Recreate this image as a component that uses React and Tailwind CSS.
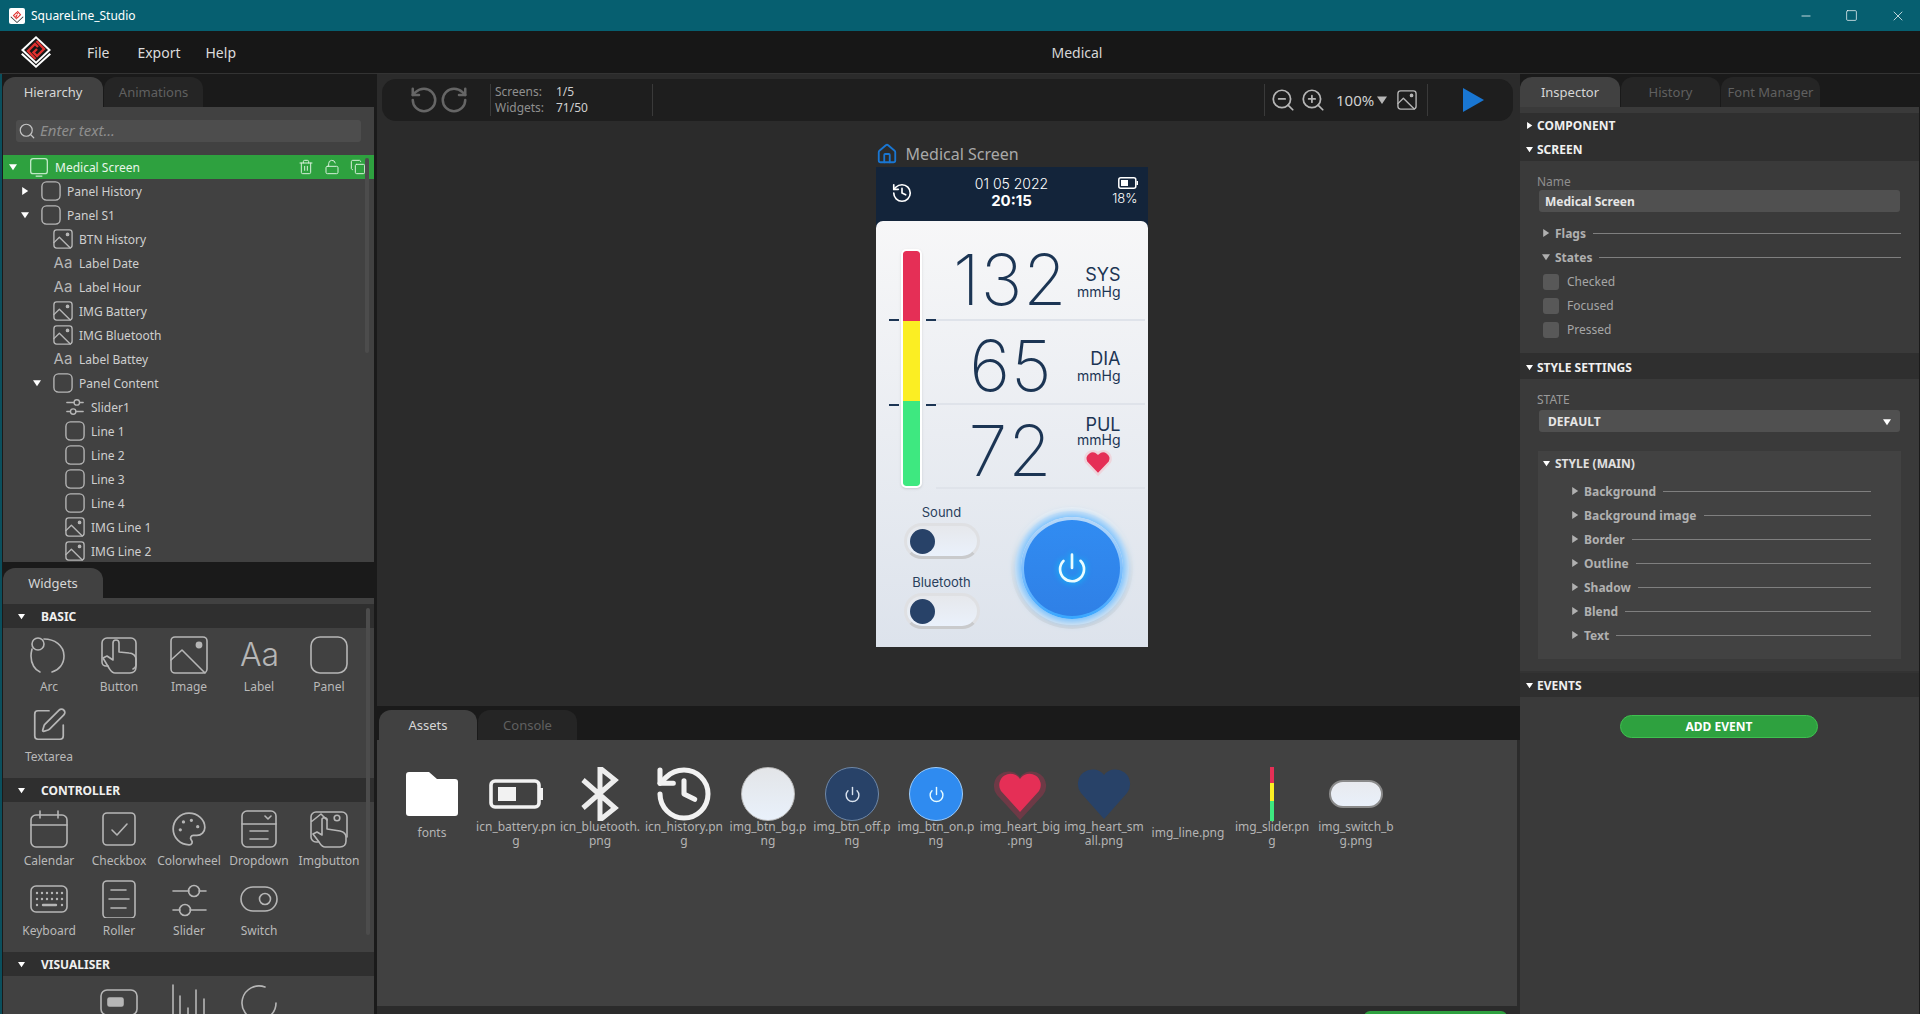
import React from 'react';
import { Search, Trash2, LockOpen, Copy, RotateCcw, RotateCw, ZoomIn, ZoomOut, House, History, Palette, SquarePen, Minus, Square, X, Power } from 'lucide-react';

const Tri = ({ dir = 'down', c = 'fill-white', s = 'w-[8px] h-[8px]' }) => (
  <svg viewBox="0 0 10 10" className={s + ' shrink-0 ' + c}>
    {dir === 'down' ? <polygon points="0,1.5 10,1.5 5,9" /> : <polygon points="1.5,0 9,5 1.5,10" />}
  </svg>
);

const I = ({ children, s = 'w-[20px] h-[20px]' }) => (
  <svg viewBox="1 1 22 22" fill="none" stroke="#b6b6b6" strokeWidth="1.5" strokeLinecap="round" strokeLinejoin="round" className={s + ' shrink-0'}>{children}</svg>
);

const PanelI = ({ s }) => <I s={s}><rect x="2" y="2" width="20" height="20" rx="5" /></I>;
const ImgI = ({ s }) => <I s={s}><rect x="2" y="2" width="20" height="20" rx="3" /><path d="M2 16l6-6 12 12" /><circle cx="17" cy="7" r="1.3" fill="#b6b6b6" /></I>;
const AaI = ({ big }) => <span className={big ? "w-[38px] text-center text-[32px] leading-[38px] font-light text-[#b6b6b6] font-['Inter',sans-serif]" : "w-[20px] text-center text-[15px] leading-[20px] font-normal text-[#b6b6b6] font-['Inter',sans-serif]"}>Aa</span>;
const SliderI = ({ s }) => <I s={s}><path d="M3 7h8M17 7h4M3 17h4M13 17h8" /><circle cx="14" cy="7" r="3" /><circle cx="10" cy="17" r="3" /></I>;
const ScreenI = () => <svg viewBox="0 0 24 24" fill="none" stroke="#bfe8c6" strokeWidth="1.6" className="w-[20px] h-[20px] shrink-0"><rect x="2" y="2" width="20" height="18" rx="3" /><path d="M8 23h8" /></svg>;

const tree = [
  { n: 'Panel History', d: 1, a: 'right', i: PanelI },
  { n: 'Panel S1', d: 1, a: 'down', i: PanelI },
  { n: 'BTN History', d: 2, i: ImgI },
  { n: 'Label Date', d: 2, i: AaI },
  { n: 'Label Hour', d: 2, i: AaI },
  { n: 'IMG Battery', d: 2, i: ImgI },
  { n: 'IMG Bluetooth', d: 2, i: ImgI },
  { n: 'Label Battey', d: 2, i: AaI },
  { n: 'Panel Content', d: 2, a: 'down', i: PanelI },
  { n: 'Slider1', d: 3, i: SliderI },
  { n: 'Line 1', d: 3, i: PanelI },
  { n: 'Line 2', d: 3, i: PanelI },
  { n: 'Line 3', d: 3, i: PanelI },
  { n: 'Line 4', d: 3, i: PanelI },
  { n: 'IMG Line 1', d: 3, i: ImgI },
  { n: 'IMG Line 2', d: 3, i: ImgI },
];
const indent = ['w-0', 'w-[12px]', 'w-[24px]', 'w-[36px]'];

const Logo = ({ s, bg = '#171717', under = '#fff' }) => (
  <svg viewBox="0 0 32 32" className={s + ' shrink-0'}>
    <polygon points="16,0 31,14 16,28 1,14" fill="#fff" />
    <polygon points="16,2.500 28,14 16,25.500 4,14" fill={bg} />
    <path d="M16 29.500L2.500 17 1 18.500 16 32 31 18.500 29.500 17z" fill={under} />
    <path d="M16.500 5l7.500 8-7 7-3.500-3.500 3.500-3.500M15.500 23l-7.500-8 7-7 3 3" fill="none" stroke="#e0312f" strokeWidth="2.4" />
  </svg>
);

const W = ({ children }) => <svg viewBox="0 0 38 38" fill="none" stroke="#b6b6b6" strokeWidth="1.6" strokeLinecap="round" strokeLinejoin="round" className="w-[38px] h-[38px]">{children}</svg>;

const wArc = <W><circle cx="8" cy="8" r="6" /><path d="M14 3c10 0 20 6 20 17 0 8-5 14-12 16M10 36C5 34 1 28 1 20c0-3 .5-5 1-7" /></W>;
const wBtn = <W><path d="M8 30H6a4 4 0 0 1-4-4V7a5 5 0 0 1 5-5h24a5 5 0 0 1 5 5v22a5 5 0 0 1-3 4" /><path d="M3 22l4-2 6 4V7a3 3 0 0 1 6 0v9l10 1c4 0 7 3 7 6v8c0 3-2 6-6 6H15c-3 0-4-2-6-5z" /></W>;
const wImg = <W><rect x="1" y="1" width="36" height="36" rx="4" /><path d="M1 24l11-10 23 23" /><circle cx="29" cy="9" r="2.6" fill="#b6b6b6" /></W>;
const wPanel = <W><rect x="1" y="1" width="36" height="36" rx="9" /></W>;
const wText = <SquarePen color="#b6b6b6" strokeWidth={1.1} className="w-[38px] h-[38px]" />;
const wCal = <W><rect x="1" y="5" width="36" height="32" rx="5" /><path d="M1 15h36M10 1v7M28 1v7" /></W>;
const wChk = <W><rect x="3" y="3" width="32" height="32" rx="4" /><path d="M12 20l5 5 10-11" /></W>;
const wPal = <Palette color="#b6b6b6" strokeWidth={1.1} className="w-[38px] h-[38px]" />;
const wDrop = <W><rect x="2" y="1" width="34" height="36" rx="5" /><path d="M2 14h34M25 6l3 3 3-3M10 21h18M10 29h18" /></W>;
const wImgBtn = <W><path d="M8 32H6a5 5 0 0 1-5-5V7a5 5 0 0 1 5-5h26a5 5 0 0 1 5 5v20M1 12l10-8 6 6" /><circle cx="27" cy="8" r="2.8" /><path d="M3 24l4-2 5 3V9a3 3 0 0 1 5 0v10l13 2c4 1 6 3 6 6v4c0 3-2 6-6 6H15c-3 0-4-2-6-5z" /></W>;
const wKey = <W><rect x="1" y="6" width="36" height="26" rx="5" /><path d="M7 13h0M12 13h0M17 13h0M22 13h0M27 13h0M32 13h0M7 19h0M12 19h0M17 19h0M22 19h0M27 19h0M32 19h0M7 25h0M32 25h0" strokeWidth="2.4" /><path d="M13 25h13" strokeWidth="2.4" /></W>;
const wRoll = <W><rect x="3" y="1" width="32" height="37" rx="4" /><path d="M11 10h15M9 19h20M11 28h15" /></W>;
const wSlide = <W><path d="M3 11h16M29 11h7M3 30h7M20 30h16" /><circle cx="24" cy="11" r="5.5" /><circle cx="15" cy="30" r="5.5" /></W>;
const wSw = <W><rect x="1" y="7" width="36" height="24" rx="12" /><circle cx="25" cy="19" r="5.5" /></W>;
const wBar = <W><rect x="1" y="6" width="36" height="25" rx="6" /><rect x="8" y="14" width="15" height="8" rx="1.5" fill="#b6b6b6" /></W>;
const wChart = <W><path d="M3 1v37M10 12v26M18 24v14M26 6v32M34 15v23" /></W>;
const wSpin = <W><path d="M25 3A17 17 0 1 0 36 19" /></W>;

const Widget = ({ icon, label }) => (
  <div className="w-[70px] h-[70px] flex flex-col items-center">
    <div className="w-[38px] h-[39px] flex items-center justify-center">{icon}</div>
    {label && <div className="mt-[5px] text-[12px] leading-[16px] text-[#b9b9b9] whitespace-nowrap">{label}</div>}
  </div>
);

const SectionH = ({ label }) => (
  <div className="h-[24px] bg-[#2f2f2f] flex items-center pl-[15px] gap-[16px] shrink-0">
    <Tri s="w-[7px] h-[7px]" />
    <span className="pt-[1px] text-[12px] font-bold text-[#f0f0f0]">{label}</span>
  </div>
);

const Tab = ({ label, active, w = 'w-[99px]' }) => (
  <div className={(active ? 'bg-[#414141] text-[#d6d6d6] ' : 'bg-[#252525] text-[#606060] ') + w + ' h-[30px] pt-[1px] rounded-t-[12px] flex items-center justify-center text-[13px] shrink-0'}>{label}</div>
);

const Left = () => (
  <div className="w-[371px] ml-[1px] flex flex-col shrink-0 bg-[#1a1a1a] overflow-hidden">
    <div className="flex gap-[1px] pt-[3px] shrink-0 h-[33px]">
      <Tab label="Hierarchy" active w="w-[100px]" />
      <Tab label="Animations" />
    </div>
    <div className="h-[455px] bg-[#414141] shrink-0 relative overflow-hidden">
      <div className="mx-[13px] mt-[13px] h-[22px] bg-[#4d4d4d] rounded-[3px] flex items-center pl-[2px] gap-[4px]">
        <Search size={18} color="#c4c4c4" strokeWidth={1.6} />
        <span className="pb-[2px] text-[15px] italic text-[#8e8e8e]">Enter text...</span>
      </div>
      <div className="mt-[13px] h-[24px] bg-[#2ea13f] flex items-center pl-[1px] pr-[8px]">
        <div className="w-[25px] flex pl-[5px]"><Tri /></div>
        <ScreenI />
        <span className="ml-[6px] pt-[1px] text-[12px] text-[#e8f5ea] flex-1">Medical Screen</span>
        <div className="flex gap-[10px] items-center">
          <Trash2 size={16} color="#d6f0da" strokeWidth={1.5} />
          <LockOpen size={16} color="#d6f0da" strokeWidth={1.5} />
          <Copy size={16} color="#d6f0da" strokeWidth={1.5} />
        </div>
      </div>
      {tree.map((t) => {
        const Ic = t.i;
        return (
          <div key={t.n} className="h-[24px] flex items-center pl-[1px]">
            <div className={indent[t.d] + ' shrink-0'} />
            <div className="w-[25px] flex pl-[5px] shrink-0">{t.a && <Tri dir={t.a} />}</div>
            <Ic />
            <span className="ml-[6px] pt-[1px] text-[12px] text-[#cfcfcf] whitespace-nowrap">{t.n}</span>
          </div>
        );
      })}
      <div className="absolute left-[362px] top-[51px] w-[4px] h-[195px] rounded-full bg-[#4c4c4c]" />
    </div>
    <div className="pt-[6px] shrink-0 h-[36px]"><Tab label="Widgets" active w="w-[100px]" /></div>
    <div className="flex-1 bg-[#414141] pt-[6px] relative overflow-hidden">
      <div className="absolute left-[363px] top-[10px] w-[4px] h-[327px] rounded-full bg-[#4c4c4c]" />
      <SectionH label="BASIC" />
      <div className="flex flex-wrap pl-[11px] pt-[7px] pb-[3px]">
        <Widget icon={wArc} label="Arc" /><Widget icon={wBtn} label="Button" /><Widget icon={wImg} label="Image" /><Widget icon={<AaI big />} label="Label" /><Widget icon={wPanel} label="Panel" /><Widget icon={wText} label="Textarea" />
      </div>
      <SectionH label="CONTROLLER" />
      <div className="flex flex-wrap pl-[11px] pt-[7px] pb-[3px]">
        <Widget icon={wCal} label="Calendar" /><Widget icon={wChk} label="Checkbox" /><Widget icon={wPal} label="Colorwheel" /><Widget icon={wDrop} label="Dropdown" /><Widget icon={wImgBtn} label="Imgbutton" />
        <Widget icon={wKey} label="Keyboard" /><Widget icon={wRoll} label="Roller" /><Widget icon={wSlide} label="Slider" /><Widget icon={wSw} label="Switch" />
      </div>
      <SectionH label="VISUALISER" />
      <div className="flex pl-[81px] pt-[7px]">
        <Widget icon={wBar} /><Widget icon={wChart} /><Widget icon={wSpin} />
      </div>
    </div>
  </div>
);

const Unit = ({ a, cls }) => (
  <div className={'w-[68px] flex flex-col items-end text-[#1c3554] ' + cls}>
    <span className="text-[18px] leading-[20px]">{a}</span>
    <span className="text-[14px] leading-[14px]">mmHg</span>
  </div>
);

const Toggle = ({ label }) => (
  <div className="flex flex-col items-center w-[76px]">
    <span className="text-[13px] leading-[18px] text-[#2a3f5c]">{label}</span>
    <div className="mt-[2px] w-[76px] h-[36px] rounded-full bg-gradient-to-b from-[#e6e8ec] to-[#eaf1fb] border-[3px] border-[#dfe0e3] border-b-[#c9cacc] flex items-center pl-[3px]">
      <div className="w-[25px] h-[25px] rounded-full bg-[#284268]" />
    </div>
  </div>
);

const Phone = () => (
  <div className="w-[272px] h-[480px] bg-[#13243a] flex flex-col font-['Inter',sans-serif] shrink-0">
    <div className="h-[54px] shrink-0 flex items-center pb-[3px]">
      <div className="w-[37px] flex justify-end"><History size={22} color="#fff" strokeWidth={1.8} /></div>
      <div className="flex-1 flex flex-col items-center text-white pl-[11px] pb-[2px]">
        <span className="text-[14px] leading-[17px] font-light">01 05 2022</span>
        <span className="text-[15px] leading-[17px] font-bold">20:15</span>
      </div>
      <div className="w-[48px] flex flex-col items-end pr-[10px] text-white">
        <svg viewBox="0 0 20 12" className="w-[20px] h-[12px] -mt-[1px]"><rect x="0.8" y="0.8" width="17" height="10.4" rx="2" fill="none" stroke="#fff" strokeWidth="1.5" /><rect x="3" y="3" width="7" height="6" fill="#fff" /><rect x="18.500" y="4" width="1.5" height="4" fill="#fff" /></svg>
        <span className="text-[13px] leading-[18px] font-light">18%</span>
      </div>
    </div>
    <div className="flex-1 rounded-t-[7px] bg-gradient-to-b from-[#f7f7f8] to-[#dde3ec] flex flex-col relative">
      <div className="h-[100px] border-b-2 border-[#dfe3ea] flex items-center justify-end pr-[24px] ml-[60px] mr-[3px]">
        <span className="mt-[20px] text-[70px] leading-none font-extralight text-[#1c3554] tracking-[1px] -mr-[15px]">132</span>
        <Unit a="SYS" cls="mt-[24px]" />
      </div>
      <div className="h-[84px] border-b-2 border-[#dfe3ea] flex items-center justify-end pr-[24px] ml-[60px] mr-[3px]">
        <span className="mt-[8px] text-[70px] leading-none font-extralight text-[#1c3554] tracking-[1px]">65</span>
        <Unit a="DIA" cls="mt-[8px]" />
      </div>
      <div className="h-[84px] border-b-2 border-[#dfe3ea] flex items-center justify-end pr-[24px] ml-[60px] mr-[3px]">
        <span className="mt-[10px] text-[70px] leading-none font-extralight text-[#1c3554] tracking-[1px]">72</span>
        <div className="w-[68px] flex flex-col items-end text-[#1c3554]">
          <span className="text-[18px] leading-[17px]">PUL</span>
          <span className="text-[14px] leading-[13px]">mmHg</span>
          <svg viewBox="0 0 24 24" className="w-[30px] h-[30px] mt-[1px] mr-[8px]"><path d="M12 22L2.500 12A6 6 0 0 1 12 5a6 6 0 0 1 9.500 7z" fill="#e52f56" stroke="#eed5dc" strokeWidth="2" /></svg>
        </div>
      </div>
      <div className="absolute left-[25px] top-[28px] w-[21px] h-[239px] rounded-[5px] border-2 border-white bg-white flex flex-col overflow-hidden shadow-sm">
        <div className="h-[70px] bg-[#e52f56] rounded-t-[3px]" />
        <div className="h-[80px] bg-[#fbee23]" />
        <div className="flex-1 bg-[#3ee880] rounded-b-[3px]" />
      </div>
      <div className="absolute left-[13px] top-[98px] w-[10px] h-[2px] bg-[#1c3554]" />
      <div className="absolute left-[50px] top-[98px] w-[10px] h-[2px] bg-[#1c3554]" />
      <div className="absolute left-[13px] top-[183px] w-[10px] h-[2px] bg-[#1c3554]" />
      <div className="absolute left-[50px] top-[183px] w-[10px] h-[2px] bg-[#1c3554]" />
      <div className="flex-1 flex pl-[28px] pt-[14px]">
        <div className="flex flex-col gap-[14px] w-[76px]">
          <Toggle label="Sound" />
          <Toggle label="Bluetooth" />
        </div>
        <div className="ml-[31px] mt-[4px] w-[122px] h-[122px] rounded-full bg-gradient-to-b from-[#edf0f4] to-[#d2d6dc] flex items-center justify-center">
          <div className="w-[114px] h-[114px] rounded-full bg-gradient-to-b from-[#dfe9f4] to-[#e4eaf0] flex items-center justify-center">
            <div className="w-[102px] h-[102px] rounded-full bg-gradient-to-b from-[#b8d8f8] to-[#36a6ff] shadow-[0_0_8px_3px_#6cbcff] flex items-center justify-center">
              <div className="w-[96px] h-[96px] rounded-full bg-gradient-to-b from-[#318cf2] to-[#2f80e6] flex items-center justify-center">
                <Power size={32} color="#eafcff" strokeWidth={2} className="drop-shadow-[0_0_3px_#00d0ff]" />
              </div>
            </div>
          </div>
        </div>
      </div>
    </div>
  </div>
);

const assets = [
  { a: ['fonts'], one: true, g: <svg viewBox="0 0 52 44" className="w-[52px] h-[44px]"><path d="M3 0h20l8 7h18a3 3 0 0 1 3 3v31a3 3 0 0 1-3 3H3a3 3 0 0 1-3-3V3a3 3 0 0 1 3-3z" fill="#fff" /></svg> },
  { a: ['icn_battery.pn', 'g'], g: <svg viewBox="0 0 54 30" className="w-[54px] h-[30px]"><rect x="2" y="2" width="48" height="26" rx="4" fill="none" stroke="#f2f2f2" strokeWidth="3.6" /><rect x="9" y="8" width="18" height="14" fill="#f2f2f2" /><rect x="51" y="9" width="3" height="12" fill="#f2f2f2" /></svg> },
  { a: ['icn_bluetooth.', 'png'], g: <svg viewBox="0 0 40 54" className="w-[40px] h-[54px]"><path d="M3 13l32 28-15 12V1l15 12L3 41" fill="none" stroke="#ededed" strokeWidth="5" /></svg> },
  { a: ['icn_history.pn', 'g'], g: <div className="w-[54px] h-[54px] flex items-center justify-center"><History size={64} color="#f2f2f2" strokeWidth={1.9} className="shrink-0" /></div> },
  { a: ['img_btn_bg.p', 'ng'], g: <div className="w-[54px] h-[54px] rounded-full bg-gradient-to-b from-[#e3e5e8] to-[#e9f1fb] border border-[#bbbbbb]" /> },
  { a: ['img_btn_off.p', 'ng'], g: <div className="w-[54px] h-[54px] rounded-full bg-[#284268] border border-[#6f88a8] flex items-center justify-center"><Power size={17} color="#d9e2ee" strokeWidth={2} /></div> },
  { a: ['img_btn_on.p', 'ng'], g: <div className="w-[54px] h-[54px] rounded-full bg-[#2f8bf0] border border-[#9ccbfa] flex items-center justify-center"><Power size={17} color="#e6fbff" strokeWidth={2} /></div> },
  { a: ['img_heart_big', '.png'], g: <svg viewBox="0 0 54 54" className="w-[54px] h-[54px]"><path d="M27 53L4 28A14 14 0 0 1 27 10a14 14 0 0 1 23 18z" fill="#6d3a46" /><path d="M27 45L8 24A11 11 0 0 1 27 12a11 11 0 0 1 19 12z" fill="#e52f56" /></svg> },
  { a: ['img_heart_sm', 'all.png'], g: <svg viewBox="0 0 54 54" className="w-[54px] h-[54px]"><path d="M27 52L4 26A13 13 0 0 1 27 8a13 13 0 0 1 23 18z" fill="#284268" /></svg> },
  { a: ['img_line.png'], one: true, g: null },
  { a: ['img_slider.pn', 'g'], g: <div className="w-[4px] h-[54px] flex flex-col"><div className="h-[16px] bg-[#e52f56]" /><div className="h-[18px] bg-[#fbee23]" /><div className="flex-1 bg-[#3ee880]" /></div> },
  { a: ['img_switch_b', 'g.png'], g: <div className="w-[54px] h-[28px] rounded-full bg-gradient-to-b from-[#e8eaef] to-[#e9f0fa] border-2 border-[#8a8a8a]" /> },
];

const Center = () => (
  <div className="flex-1 flex flex-col min-w-0 bg-[#2b2b2b] ml-[3px]">
    <div className="h-[632px] shrink-0 flex flex-col pl-[5px] pr-[7px] pt-[5px]">
      <div className="h-[42px] bg-[#1e1e1e] rounded-[14px] flex items-center shrink-0">
        <div className="w-[109px] flex items-center pl-[27px] shrink-0">
          <RotateCcw size={30} color="#666" strokeWidth={2} />
          <RotateCw size={30} color="#666" strokeWidth={2} />
        </div>
        <div className="w-[163px] h-[32px] border-x border-[#3a3a3a] pl-[4px] grid grid-cols-[61px_1fr] text-[12px] leading-[16px] shrink-0 -ml-[1px]">
          <span className="text-[#8f8f8f]">Screens:</span><span className="text-[#d0d0d0]">1/5</span>
          <span className="text-[#8f8f8f]">Widgets:</span><span className="text-[#d0d0d0]">71/50</span>
        </div>
        <div className="flex-1" />
        <div className="h-[32px] w-[164px] border-x border-[#3a3a3a] flex items-center pl-[5px] shrink-0">
          <ZoomOut size={26} color="#b6b6b6" strokeWidth={1.6} />
          <ZoomIn size={26} color="#b6b6b6" strokeWidth={1.6} className="ml-[4px]" />
          <span className="ml-[10px] text-[15px] text-[#d0d0d0]">100%</span>
          <Tri c="fill-[#b6b6b6]" s="w-[10px] h-[10px] ml-[3px]" />
          <ImgI s="w-[20px] h-[22px] ml-[10px]" />
        </div>
        <svg viewBox="0 0 22 24" className="w-[22px] h-[24px] ml-[34px] mr-[29px] shrink-0"><polygon points="1,0 22,12 1,24" fill="#1976d2" /></svg>
      </div>
      <div className="flex-1 flex justify-center pl-[128px]">
        <div className="flex flex-col pt-[20px]">
          <div className="flex items-center h-[26px] gap-[8px]">
            <House size={22} color="#1976d2" strokeWidth={2} />
            <span className="text-[16px] text-[#a9a9a9]">Medical Screen</span>
          </div>
          <Phone />
        </div>
      </div>
    </div>
    <div className="h-[34px] bg-[#1a1a1a] shrink-0 flex items-end pl-[2px] gap-[1px]">
      <Tab label="Assets" active w="w-[98px]" />
      <Tab label="Console" />
    </div>
    <div className="h-[266px] shrink-0 bg-[#414141] mr-[3px] flex pl-[13px] pt-[27px]">
      {assets.map((x) => (
        <div key={x.a[0]} className="w-[84px] flex flex-col items-center shrink-0">
          <div className="h-[54px] flex items-center justify-center">{x.g}</div>
          <div className={(x.one ? 'mt-[5px] ' : '-mt-[1px] ') + 'text-[12px] leading-[14px] text-[#b4b4b4] text-center'}>
            {x.a.map((l) => <div key={l} className="whitespace-nowrap">{l}</div>)}
          </div>
        </div>
      ))}
    </div>
    <div className="flex-1 flex justify-end pr-[13px] pt-[5px]"><div className="w-[143px] h-[12px] rounded-t-[6px] bg-[#2ea13f]" /></div>
  </div>
);

const SubHead = ({ label, open, cls = 'pl-[3px] gap-[5px]', line = 'ml-[2px]' }) => (
  <div className={"h-[24px] flex items-center " + cls}>
    <Tri dir={open ? 'down' : 'right'} c="fill-[#b0b0b0]" s="w-[8px] h-[8px]" />
    <span className="pt-[1px] text-[12px] font-bold text-[#b0b0b0] whitespace-nowrap">{label}</span>
    <div className={"flex-1 h-[1px] bg-[#7f7f7f] " + line} />
  </div>
);

const H = ({ label, dir }) => (
  <div className="h-[24px] bg-[#2f2f2f] flex items-center pl-[6px] gap-[4px] shrink-0"><Tri dir={dir} s="w-[7px] h-[7px]" /><span className="pt-[1px] text-[12px] font-bold text-[#f0f0f0]">{label}</span></div>
);

const Right = () => (
  <div className="w-[400px] flex flex-col shrink-0 bg-[#1a1a1a] overflow-hidden">
    <div className="flex gap-[1px] pt-[3px] shrink-0 h-[33px]">
      <Tab label="Inspector" active w="w-[100px]" />
      <Tab label="History" />
      <Tab label="Font Manager" />
    </div>
    <div className="flex-1 bg-[#3a3a3a] mr-[1px] flex flex-col">
      <div className="h-[6px] shrink-0" />
      <H label="COMPONENT" dir="right" />
      <H label="SCREEN" />
      <div className="h-[192px] shrink-0 pl-[17px] pr-[18px] pt-[13px]">
        <div className="text-[12px] leading-[16px] text-[#8f8f8f]">Name</div>
        <div className="ml-[2px] h-[22px] pt-[1px] bg-[#505050] rounded-[3px] flex items-center pl-[6px] text-[12px] font-bold text-[#e6e6e6] mr-[1px]">Medical Screen</div>
        <div className="mt-[9px] mb-[1px] pl-[2px]">
          <SubHead label="Flags" />
          <SubHead label="States" open />
        </div>
        {['Checked', 'Focused', 'Pressed'].map((s) => (
          <div key={s} className="h-[24px] flex items-center pl-[6px] gap-[8px]">
            <div className="w-[16px] h-[16px] rounded-[3px] bg-[#585858]" />
            <span className="text-[12px] text-[#a6a6a6]">{s}</span>
          </div>
        ))}
      </div>
      <div className="h-[2px] bg-[#2f2f2f] shrink-0" />
      <H label="STYLE SETTINGS" />
      <div className="h-[292px] shrink-0 pl-[17px] pr-[18px] pt-[12px]">
        <div className="text-[12px] leading-[18px] mb-[1px] text-[#9a9a9a]">STATE</div>
        <div className="ml-[2px] mr-[1px] h-[22px] pt-[1px] bg-[#505050] rounded-[3px] flex items-center justify-between pl-[9px] pr-[9px] text-[12px] font-bold text-[#e6e6e6]">DEFAULT<Tri s="w-[8px] h-[8px]" /></div>
        <div className="mt-[19px] ml-[1px] h-[208px] bg-[#424242] pl-[5px] pr-[30px]">
          <div className="h-[24px] flex items-center gap-[4px]"><Tri s="w-[7px] h-[7px]" /><span className="pt-[1px] pl-[1px] text-[12px] font-bold text-[#e0e0e0]">STYLE (MAIN)</span></div>
          <div className="pl-[28px] pt-[4px]">
            {['Background', 'Background image', 'Border', 'Outline', 'Shadow', 'Blend', 'Text'].map((s) => <SubHead key={s} label={s} cls="gap-[5px]" line="ml-[2px]" />)}
          </div>
        </div>
      </div>
      <div className="h-[2px] bg-[#333333] shrink-0" />
      <H label="EVENTS" />
      <div className="flex justify-center pt-[18px] pr-[1px]">
        <div className="w-[198px] h-[23px] pt-[1px] rounded-full bg-[#2ea13f] border border-[#3fc04f] flex items-center justify-center text-[12px] font-bold text-white">ADD EVENT</div>
      </div>
    </div>
  </div>
);

export default function App() {
  return (
    <div className="w-[1920px] h-[1014px] flex flex-col overflow-hidden bg-[#1a1a1a] font-['Noto_Sans',sans-serif]">
      <div className="h-[31px] bg-[#065f70] flex items-center shrink-0 pl-[9px]">
        <div className="w-[16px] h-[16px] bg-white rounded-[2px] flex items-center justify-center"><Logo s="w-[14px] h-[14px]" bg="#ffffff" under="#333333" /></div>
        <span className="ml-[6px] text-[12px] text-white flex-1">SquareLine_Studio</span>
        <div className="flex items-center gap-[32px] pr-[14px]">
          <Minus size={14} color="#fff" strokeWidth={1.3} />
          <Square size={13} color="#fff" strokeWidth={1.3} />
          <X size={16} color="#fff" strokeWidth={1.1} />
        </div>
      </div>
      <div className="h-[43px] bg-[#171717] border-b border-[#333333] flex items-center shrink-0">
        <div className="w-[234px] flex items-center shrink-0 pl-[20px]">
          <Logo s="w-[32px] h-[32px]" />
          <span className="ml-[35px] text-[14px] text-[#dcdcdc]">File</span>
          <span className="ml-[28px] text-[14px] text-[#dcdcdc]">Export</span>
          <span className="ml-[25px] text-[14px] text-[#dcdcdc]">Help</span>
        </div>
        <div className="flex-1 text-center text-[14px] text-[#d6d6d6]">Medical</div>
      </div>
      <div className="flex-1 flex min-h-0 border-l-2 border-[#0a4f5d]">
        <Left />
        <Center />
        <Right />
      </div>
    </div>
  );
}
